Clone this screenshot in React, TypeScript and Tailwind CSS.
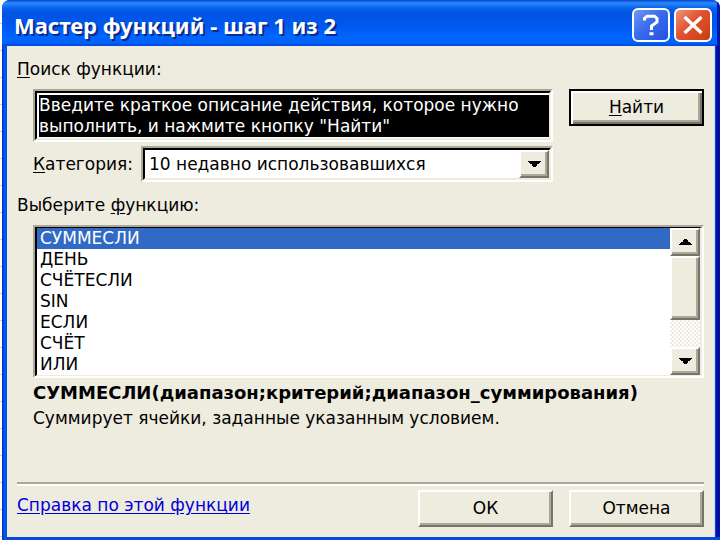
import React, { useState } from 'react';

const functionNames = ['СУММЕСЛИ', 'ДЕНЬ', 'СЧЁТЕСЛИ', 'SIN', 'ЕСЛИ', 'СЧЁТ', 'ИЛИ'];

const raised =
  'bg-[#eeebdf] border-2 border-t-white border-l-white border-r-[#77746a] border-b-[#77746a] shadow-[inset_-2px_-2px_0_#aca899]';

const sunkenOuter = 'border-2 border-t-[#aca899] border-l-[#aca899] border-r-white border-b-white';
const sunkenInner = 'border-t-black border-l-black border-r-[#eeebdf] border-b-[#eeebdf]';

interface ArrowProps {
  up?: boolean;
}

const Arrow: React.FC<ArrowProps> = ({ up }) => (
  <svg width="13" height="6" viewBox="0 0 13 6" shapeRendering="crispEdges" className={up ? 'rotate-180' : ''} aria-hidden="true">
    <path d="M0 0H13V1H12V2H11V3H9V5H8V6H5V5H4V3H2V2H1V1H0Z" fill="#000" />
  </svg>
);

const TitleBar: React.FC = () => (
  <header className="flex h-[46px] items-center justify-between bg-[linear-gradient(#0842c8_0px,#2a8bff_3px,#0a62ee_8px,#0054e3_14px,#0058ee_26px,#0066ff_38px,#0060f8_43px,#0046d8_46px)] pt-1 pr-2 pl-3 shadow-[inset_-3px_0_0_#0018b0]">
    <h1 className="font-['Noto_Sans',sans-serif] text-[22px] font-bold whitespace-nowrap text-white [text-shadow:2px_2px_0_#0a2a8c]">
      Мастер функций - шаг 1 из 2
    </h1>
    <div className="flex gap-1">
      <button
        type="button"
        aria-label="Справка"
        className="flex h-[34px] w-[38px] items-center justify-center rounded-md border-2 border-white bg-[linear-gradient(135deg,#6f98f5,#3a6cee_45%,#2352dc)]"
      >
        <svg width="18" height="22" viewBox="0 0 18 22" fill="none" stroke="#fff" strokeWidth="3" aria-hidden="true">
          <path d="M2.5 6.5V4.5L5 2.2H12.5L15 4.5V8L9.5 12V16" />
          <path d="M7.5 19.7H11.5" />
        </svg>
      </button>
      <button
        type="button"
        aria-label="Закрыть"
        className="flex h-[34px] w-[38px] items-center justify-center rounded-md border-2 border-white bg-[linear-gradient(135deg,#ee9478,#e0532f_45%,#c93c12)]"
      >
        <svg width="20" height="18" viewBox="0 0 20 18" fill="none" stroke="#fff" strokeWidth="3.4" aria-hidden="true">
          <path d="M1.5 1L18.5 17M18.5 1L1.5 17" />
        </svg>
      </button>
    </div>
  </header>
);

const Scrollbar: React.FC = () => (
  <div className="flex w-[30px] flex-col bg-[repeating-conic-gradient(#eeebdf_0_25%,#fff_0_50%)] bg-[length:4px_4px]">
    <button type="button" aria-label="Вверх" className={`flex h-7 items-center justify-center ${raised}`}>
      <Arrow up />
    </button>
    <div className={`h-16 ${raised}`} />
    <button type="button" aria-label="Вниз" className={`mt-auto flex h-7 items-center justify-center ${raised}`}>
      <Arrow />
    </button>
  </div>
);

export default function App() {
  const [query, setQuery] = useState('Введите краткое описание действия, которое нужно выполнить, и нажмите кнопку "Найти"');
  const [selected, setSelected] = useState('СУММЕСЛИ');

  return (
    <div className="flex min-h-screen flex-col bg-[repeating-linear-gradient(#fff_0_23px,#c8ccd4_23px_24px,#fff_24px_27px)] pl-0.5 font-['DejaVu_Sans',sans-serif] text-[17px] leading-[21px] text-black">
      <div className="flex flex-1 flex-col overflow-hidden rounded-t-lg bg-[linear-gradient(90deg,#0030c8_0px,#0a5cf0_3px,#0a48dc_5px)]">
        <TitleBar />
        <main className="mr-[5px] mb-[3px] ml-[5px] flex flex-1 flex-col border-r border-[#c9dcf5] bg-[#eeebdf] pr-[10px] pb-2.5 pl-2.5 shadow-[1px_0_0_#0a48dc,5px_0_0_#0010a0]">
          <label htmlFor="query" className="mt-[13px] mb-[9px] self-start">
            <u className="underline-offset-2">П</u>оиск функции:
          </label>

          <div className="ml-4 flex items-start gap-4">
            <div className="flex min-w-0 flex-1 flex-col gap-1">
              <div className={sunkenOuter}>
                <div className={`border-2 bg-white pt-0.5 pb-px pl-0.5 ${sunkenInner}`}>
                  <textarea
                    id="query"
                    rows={2}
                    value={query}
                    onChange={(e) => setQuery(e.target.value)}
                    className="block w-full resize-none overflow-hidden bg-black text-white outline-none"
                  />
                </div>
              </div>
              <div className="flex items-center justify-between gap-2">
                <label htmlFor="category" className="whitespace-nowrap">
                  <u className="underline-offset-2">К</u>атегория:
                </label>
                <div className={`min-w-0 flex-1 ${sunkenOuter}`}>
                  <div className={`relative border-2 bg-white ${sunkenInner}`}>
                    <select id="category" className="block h-7 w-full appearance-none bg-white pl-1 outline-none">
                      <option>10 недавно использовавшихся</option>
                    </select>
                    <span className={`pointer-events-none absolute inset-y-0 right-0 flex w-[30px] items-center justify-center ${raised}`}>
                      <Arrow />
                    </span>
                  </div>
                </div>
              </div>
            </div>
            <button
              type="button"
              className="h-[37px] w-[135px] border-2 border-black bg-[#eeebdf] shadow-[inset_2px_2px_0_#fff,inset_-2px_-2px_0_#77746a,inset_-4px_-4px_0_#aca899]"
            >
              <u className="underline-offset-2">Н</u>айти
            </button>
          </div>

          <p id="list-label" className="mt-[13px] mb-[9px]">
            Выберите <u className="underline-offset-2">ф</u>ункцию:
          </p>

          <div className={`ml-4 ${sunkenOuter}`}>
            <div className={`flex border-x-2 border-y bg-white ${sunkenInner}`}>
              <ul role="listbox" aria-labelledby="list-label" className="flex-1">
                {functionNames.map((name) => (
                  <li
                    key={name}
                    role="option"
                    aria-selected={name === selected}
                    onClick={() => setSelected(name)}
                    className={`pl-[3px] ${name === selected ? 'bg-[#316ac5] text-white' : ''}`}
                  >
                    {name}
                  </li>
                ))}
              </ul>
              <Scrollbar />
            </div>
          </div>

          <div className="mt-1 ml-4">
            <p className="text-lg leading-[21px] font-bold">СУММЕСЛИ(диапазон;критерий;диапазон_суммирования)</p>
            <p className="mt-[5px]">Суммирует ячейки, заданные указанным условием.</p>
          </div>

          <footer className="mt-auto border-t-2 border-[#aca899]">
            <div className="flex items-start justify-between border-t-2 border-white pt-1">
              <a href="#help" className="mt-[5px] text-[#0000d8] underline underline-offset-2">
                Справка по этой функции
              </a>
              <div className="flex gap-4">
                <button type="button" className={`h-[37px] w-[135px] ${raised}`}>
                  ОК
                </button>
                <button type="button" className={`h-[37px] w-[135px] ${raised}`}>
                  Отмена
                </button>
              </div>
            </div>
          </footer>
        </main>
      </div>
    </div>
  );
}
